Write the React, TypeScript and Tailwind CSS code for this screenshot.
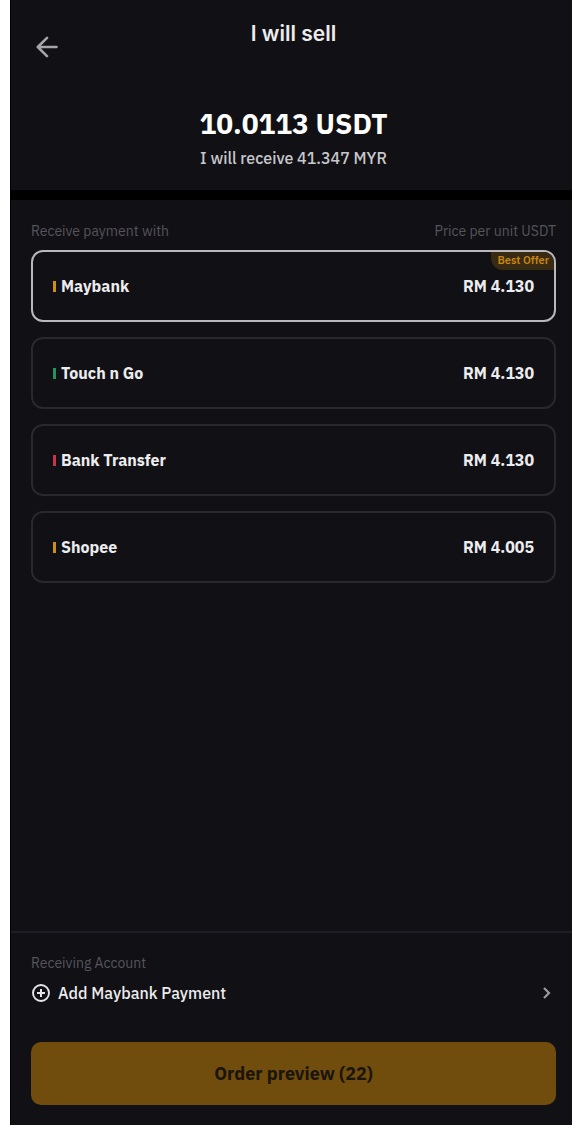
import { useState } from "react";

type Method = { name: string; price: string; bar: string; best?: boolean };

const methods: Method[] = [
  { name: "Maybank", price: "RM 4.130", bar: "bg-[#d18f0f]", best: true },
  { name: "Touch n Go", price: "RM 4.130", bar: "bg-[#23935d]" },
  { name: "Bank Transfer", price: "RM 4.130", bar: "bg-[#c93545]" },
  { name: "Shopee", price: "RM 4.005", bar: "bg-[#d18f0f]" },
];

function BackIcon() {
  return (
    <svg width="22" height="22" viewBox="0 0 22 22" fill="none" stroke="#a4a4a9" strokeWidth="2.6" strokeLinecap="round" strokeLinejoin="round" aria-hidden="true">
      <path d="M20.5 11H2M11 1.9 1.8 11 11 20.1" />
    </svg>
  );
}

function PlusIcon() {
  return (
    <svg width="18" height="18" viewBox="0 0 18 18" fill="none" stroke="#e6e6e8" aria-hidden="true">
      <circle cx="9" cy="9" r="8" strokeWidth="1.9" />
      <path d="M9 5v8M5 9h8" strokeWidth="2" />
    </svg>
  );
}

function ChevronIcon() {
  return (
    <svg width="8" height="12" viewBox="0 0 8 12" fill="none" stroke="#9a9a9f" strokeWidth="2.2" aria-hidden="true">
      <path d="m1 1 5 5-5 5" />
    </svg>
  );
}

export default function App() {
  const [selected, setSelected] = useState("Maybank");

  return (
    <div className="flex min-h-screen bg-white pl-[10px] font-['IBM_Plex_Sans','Noto_Sans',sans-serif]">
      <main className="flex flex-1 flex-col border-l border-black bg-[#111015] text-[#ececee]">
        <header className="grid grid-cols-[1fr_auto_1fr] pt-5 pr-4 pl-5">
          <button type="button" aria-label="Back" className="mt-3 justify-self-start px-[5px] py-1">
            <BackIcon />
          </button>
          <h1 className="font-['Inter',sans-serif] text-[21px] leading-7 font-semibold">I will sell</h1>
        </header>

        <section className="flex flex-col items-center border-b-[10px] border-black pt-11 pr-4 pb-5 pl-5 text-center">
          <p className="text-[28px] leading-9 font-bold text-white">10.0113 USDT</p>
          <p className="mt-1 text-base leading-6 font-medium text-[#c8c8cc]">I will receive 41.347 MYR</p>
        </section>

        <section className="pt-[21px] pr-4 pl-5">
          <div className="flex justify-between text-sm leading-5 text-[#55545b]">
            <h2>Receive payment with</h2>
            <p>Price per unit USDT</p>
          </div>
          <div role="radiogroup" aria-label="Receive payment with" className="mt-[9px] flex flex-col gap-[15px]">
            {methods.map((m) => (
              <label
                key={m.name}
                className={
                  "relative flex h-[72px] cursor-pointer items-center justify-between overflow-hidden rounded-xl border-2 px-5 text-base leading-6 font-bold " +
                  (selected === m.name ? "border-[#b9b9bc]" : "border-[#29282d]")
                }
              >
                <input
                  type="radio"
                  name="method"
                  value={m.name}
                  checked={selected === m.name}
                  onChange={() => setSelected(m.name)}
                  className="sr-only"
                />
                <span className="flex items-center gap-[5px]">
                  <span className={"h-[11px] w-[3px] " + m.bar} />
                  {m.name}
                </span>
                <span>{m.price}</span>
                {m.best && (
                  <span className="absolute top-0 right-0 rounded-bl-xl bg-[#392a14] pr-[5px] pb-[2px] pl-[6px] text-[11px] leading-4 font-semibold text-[#c68610]">
                    Best Offer
                  </span>
                )}
              </label>
            ))}
          </div>
        </section>

        <footer className="mt-auto border-t-2 border-[#1f1e24] pt-5 pr-4 pb-5 pl-5">
          <p className="text-sm leading-5 text-[#55545b]">Receiving Account</p>
          <button type="button" className="mt-2 flex w-full items-center gap-2 pr-[5px] pl-px text-left text-base leading-6 font-medium">
            <PlusIcon />
            <span className="flex-1">Add Maybank Payment</span>
            <ChevronIcon />
          </button>
          <button type="button" className="mt-[37px] h-[63px] w-full rounded-[10px] bg-[#704d0d] text-lg font-bold text-[#1b150e]">
            Order preview (22)
          </button>
        </footer>
      </main>
    </div>
  );
}
